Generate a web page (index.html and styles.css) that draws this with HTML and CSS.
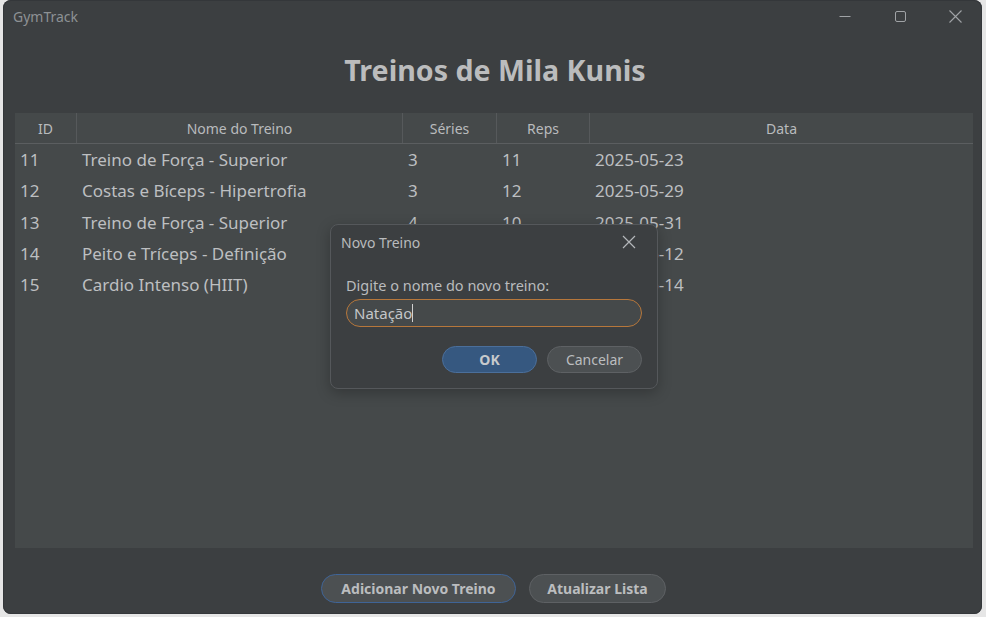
FILE: index.html
```html
<!DOCTYPE html>
<html lang="pt">
<head>
<meta charset="utf-8">
<title>GymTrack</title>
<link rel="stylesheet" href="styles.css">
</head>
<body>
<div class="window">
  <div class="titlebar">
    <span class="app-name">GymTrack</span>
    <div class="controls">
      <span class="ctl"><svg width="14" height="14" viewBox="0 0 14 14"><path d="M1.5 7.5h11" stroke="#a0a3a6" stroke-width="1" fill="none"/></svg></span>
      <span class="ctl"><svg width="14" height="14" viewBox="0 0 14 14"><rect x="2.5" y="2.5" width="10" height="10" rx="1.5" stroke="#a0a3a6" stroke-width="1" fill="none"/></svg></span>
      <span class="ctl"><svg width="14" height="14" viewBox="0 0 14 14"><path d="M1.5 1.5l12 12M13.5 1.5l-12 12" stroke="#a0a3a6" stroke-width="1.1" fill="none"/></svg></span>
    </div>
  </div>
  <h1 class="heading">Treinos de Mila Kunis</h1>
  <div class="table">
    <div class="thead">
      <div class="th">ID</div>
      <div class="th">Nome do Treino</div>
      <div class="th">Séries</div>
      <div class="th">Reps</div>
      <div class="th last">Data</div>
    </div>
    <div class="tbody">
      <div class="tr"><span>11</span><span>Treino de Força - Superior</span><span>3</span><span>11</span><span>2025-05-23</span></div>
      <div class="tr"><span>12</span><span>Costas e Bíceps - Hipertrofia</span><span>3</span><span>12</span><span>2025-05-29</span></div>
      <div class="tr"><span>13</span><span>Treino de Força - Superior</span><span>4</span><span>10</span><span>2025-05-31</span></div>
      <div class="tr"><span>14</span><span>Peito e Tríceps - Definição</span><span>4</span><span>12</span><span>2025-06-12</span></div>
      <div class="tr"><span>15</span><span>Cardio Intenso (HIIT)</span><span>3</span><span>15</span><span>2025-06-14</span></div>
    </div>
  </div>
  <div class="footer">
    <button class="btn primary-outline">Adicionar Novo Treino</button>
    <button class="btn secondary">Atualizar Lista</button>
  </div>

  <div class="dialog">
    <div class="dialog-title">
      <span>Novo Treino</span>
      <svg class="dlg-close" width="14" height="14" viewBox="0 0 14 14"><path d="M1 1l12 12M13 1L1 13" stroke="#b4b7ba" stroke-width="1.2" fill="none"/></svg>
    </div>
    <div class="dialog-body">
      <label class="prompt">Digite o nome do novo treino:</label>
      <div class="input"><span>Natação</span><span class="caret"></span></div>
      <div class="dialog-actions">
        <button class="dbtn ok">OK</button>
        <button class="dbtn cancel">Cancelar</button>
      </div>
    </div>
  </div>
</div>
</body>
</html>
```

FILE: styles.css
```css
html, body {
  margin: 0;
  padding: 0;
}
body {
  background: #e6e6e6;
  width: 986px;
  height: 617px;
  overflow: hidden;
  font-family: "Noto Sans", "Open Sans", sans-serif;
}
.window {
  position: relative;
  margin-left: 3px;
  width: 979px;
  height: 614px;
  background: #3c3f41;
  border-radius: 8px;
  box-shadow: inset 0 0 0 1px #34373a;
  display: flex;
  flex-direction: column;
}
.titlebar {
  height: 34px;
  display: flex;
  align-items: center;
  justify-content: space-between;
  padding-left: 10px;
  flex: none;
}
.app-name {
  color: #8d9194;
  font-size: 14px;
  margin-top: -1px;
}
.controls {
  display: flex;
  height: 100%;
  align-items: flex-start;
}
.ctl {
  width: 55px;
  display: flex;
  justify-content: center;
  padding-top: 9px;
}
.heading {
  margin: 16px 0 0;
  text-align: center;
  color: #bbbcbd;
  font-size: 28.6px;
  font-weight: 700;
  line-height: 40px;
  height: 40px;
  padding-left: 5px;
}
.table {
  margin: 23px 9px 0 12px;
  height: 435px;
  background: #45494a;
  display: flex;
  flex-direction: column;
  flex: none;
}
.thead, .tr {
  display: grid;
  grid-template-columns: 62px 326px 94px 93px 1fr;
}
.thead {
  height: 30px;
  border-bottom: 1px solid #5b5e60;
}
.th {
  color: #b9bbbd;
  font-size: 14px;
  display: flex;
  align-items: center;
  justify-content: center;
  border-right: 1px solid #56595b;
}
.th.last { border-right: none; }
.tr {
  height: 31.3px;
  align-items: center;
  color: #bdbfc1;
  font-size: 17px;
}
.tr span {
  padding-left: 5px;
  white-space: nowrap;
}
.footer {
  display: flex;
  justify-content: center;
  gap: 13px;
  margin-top: 26px;
  padding-left: 2px;
}
.btn {
  height: 29px;
  padding: 0;
  border-radius: 15px;
  border: 1px solid #5e6164;
  background: #4c5052;
  color: #bbbdbf;
  font-family: inherit;
  font-size: 14px;
  font-weight: 700;
  white-space: nowrap;
}
.btn.primary-outline {
  border-color: #3f6497;
  width: 195px;
}
.btn.secondary {
  width: 137px;
}
.dialog {
  position: absolute;
  left: 327px;
  top: 224px;
  width: 326px;
  height: 163px;
  background: #3c3f41;
  border: 1px solid #55585b;
  border-radius: 8px;
  box-shadow: 0 4px 14px rgba(0,0,0,0.25);
}
.dialog-title {
  display: flex;
  justify-content: space-between;
  align-items: center;
  height: 34px;
  padding: 0 21px 0 10px;
  color: #b9bbbd;
  font-size: 14px;
}
.dialog-body {
  padding: 17px 15px 0 15px;
}
.prompt {
  display: block;
  color: #b9bbbd;
  font-size: 14.5px;
  line-height: 18px;
}
.input {
  margin-top: 5px;
  height: 26px;
  border: 1px solid #b7773b;
  border-radius: 14px;
  background: #45494a;
  display: flex;
  align-items: center;
  padding-left: 7px;
  color: #c4c6c8;
  font-size: 15px;
}
.caret {
  display: inline-block;
  width: 1px;
  height: 18px;
  background: #d0d0d0;
}
.dialog-actions {
  display: flex;
  justify-content: flex-end;
  gap: 10px;
  margin-top: 19px;
}
.dbtn {
  height: 27px;
  width: 95px;
  border-radius: 14px;
  font-family: inherit;
  font-size: 14px;
}
.dbtn.ok {
  background: #365880;
  border: 1px solid #4b6f9b;
  color: #c7cacc;
  font-weight: 700;
}
.dbtn.cancel {
  background: #4c5052;
  border: 1px solid #5e6164;
  color: #bbbdbf;
}
```
